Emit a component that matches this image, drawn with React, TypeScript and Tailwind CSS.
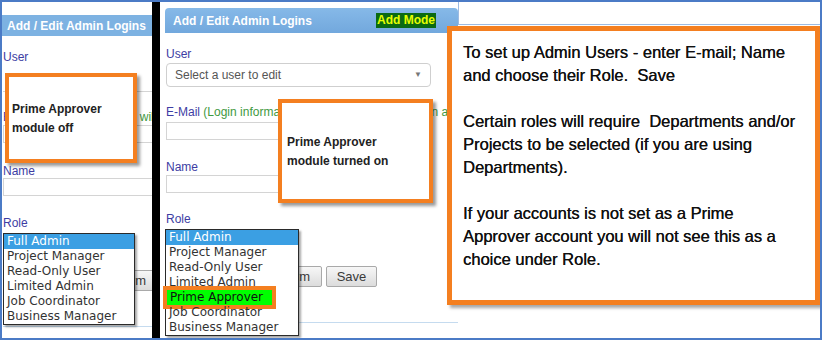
import React from "react";

const roleLeft = ["Full Admin", "Project Manager", "Read-Only User", "Limited Admin", "Job Coordinator", "Business Manager"];
const roleMid = ["Full Admin", "Project Manager", "Read-Only User", "Limited Admin", "Prime Approver", "Job Coordinator", "Business Manager"];

function Callout({ lines, className }: { lines: string[]; className: string }) {
  return (
    <div
      className={
        "absolute bg-white border-4 border-[#f47f20] shadow-[3px_3px_3px_rgba(0,0,0,0.4)] font-bold text-[12px] leading-[19px] text-[#222] whitespace-nowrap " +
        className
      }
    >
      {lines.map((l) => (
        <div key={l}>{l}</div>
      ))}
    </div>
  );
}

function ListBox({ items, className, highlight }: { items: string[]; className: string; highlight?: string }) {
  return (
    <div
      className={
        "absolute bg-white border-[1.5px] border-[#2a2a2a] shadow-[2px_2px_2px_rgba(0,0,0,0.35)] font-['DejaVu_Sans',Verdana,sans-serif] text-[12px] leading-[15px] text-[#333] " +
        className
      }
    >
      {items.map((it, i) =>
        i === 0 ? (
          <div key={it} className="bg-[#3b9fe3] text-white px-[3px] whitespace-nowrap">
            {it}
          </div>
        ) : it === highlight ? (
          <div key={it} className="h-[15px] whitespace-nowrap">
            <span className="inline-block ml-[1px] w-[105px] pl-[3px] bg-[#00ff00] text-[#111] ring-4 ring-[#f47f20]">{it}</span>
          </div>
        ) : (
          <div key={it} className="px-[3px] whitespace-nowrap">
            {it}
          </div>
        )
      )}
    </div>
  );
}

function Btn({ label, className }: { label: string; className: string }) {
  return (
    <div
      className={
        "h-[21px] flex items-center border border-[#a9a9a9] rounded-[2px] bg-gradient-to-b from-[#f7f7f7] to-[#dcdcdc] text-[13px] text-[#3a3a3a] whitespace-nowrap shrink-0 " +
        className
      }
    >
      {label}
    </div>
  );
}

export default function App() {
  const label = "h-[14px] leading-[14px] text-[12px] text-[#3d3da3] whitespace-nowrap";
  return (
    <div className="relative w-[822px] h-[340px] overflow-hidden bg-white border-2 border-[#4b7bc6] flex font-['Liberation_Sans',Arial,sans-serif]">
      {/* Left screenshot */}
      <div className="relative w-[150px] h-full overflow-hidden flex flex-col shrink-0">
        <div className="mt-[13px] h-[21px] bg-[#7db2e2] flex items-center pl-[5px] text-white font-bold text-[12px] whitespace-nowrap">
          Add / Edit Admin Logins
        </div>
        <div className="pl-[1px] flex flex-col">
          <div className={label + " mt-[14px]"}>User</div>
          <div className="mt-[2px] h-[26px] w-[200px] border-b border-[#d4d4d4]" />
          <div className={label + " mt-[18px]"}>
            E-Mail <span className="text-[#3f9a3f]">(Login information will be used to log in)</span>
          </div>
          <div className="mt-[1px] h-[18px] w-[200px] border border-[#d4d4d4]" />
          <div className={label + " mt-[21px]"}>Name</div>
          <div className="mt-[0px] h-[18px] w-[200px] border border-[#d4d4d4]" />
          <div className={label + " mt-[20px]"}>Role</div>
          <Btn label="Clear Form" className="mt-[40px] ml-[75px] w-[80px] justify-end pr-[11px]" />
          <div className="mt-[35px] h-[1px] bg-[#c5dbef] w-[200px]" />
        </div>
        <ListBox items={roleLeft} className="left-[1px] top-[231px] w-[132px]" />
      </div>

      {/* Black divider */}
      <div className="w-[8px] h-full bg-black shrink-0" />

      {/* Middle screenshot */}
      <div className="relative flex-1 h-full flex flex-col">
        <div className="flex items-start">
          <div className="ml-[5px] mt-[6px] w-[293px] h-[25px] rounded-t-[4px] bg-gradient-to-b from-[#86b9e8] to-[#72a8dd] flex items-center pl-[8px] pr-[22px] justify-between text-white font-bold text-[12px] whitespace-nowrap shrink-0">
            <span>Add / Edit Admin Logins</span>
            <span className="bg-[#0b6a12] text-[#e6ff00] px-[1px] leading-[15px]">Add Mode</span>
          </div>
          <div className="flex-1 h-[23px] border-l border-b border-[#9dbbe2]" />
        </div>
        <div className="pl-[6px] flex flex-col">
          <div className={label + " mt-[14px]"}>User</div>
          <div className="mt-[2px] h-[24px] w-[265px] border border-[#cfcfcf] rounded-[4px] flex items-center pl-[8px] pr-[8px] justify-between text-[12px] text-[#555]">
            <span>Select a user to edit</span>
            <span className="text-[8px] text-[#777]">▼</span>
          </div>
          <div className={label + " mt-[18px]"}>
            E-Mail <span className="text-[#3f9a3f]">(Login information will be used for your login a</span>
          </div>
          <div className="mt-[3px] h-[18px] w-[265px] border border-[#d4d4d4]" />
          <div className={label + " mt-[20px]"}>Name</div>
          <div className="mt-[1px] h-[18px] w-[265px] border border-[#d4d4d4]" />
          <div className={label + " mt-[19px]"}>Role</div>
          <div className="mt-[40px] flex gap-[4px] ml-[76px]">
            <Btn label="Clear Form" className="w-[80px] justify-end pr-[11px]" />
            <Btn label="Save" className="w-[51px] justify-center" />
          </div>
          <div className="mt-[35px] h-[1px] bg-[#c5dbef] w-[292px]" />
        </div>
        <ListBox items={roleMid} highlight="Prime Approver" className="left-[5px] top-[227px] w-[134px]" />
      </div>

      {/* Callouts */}
      <Callout lines={["Prime Approver", "module off"]} className="left-[3px] top-[71px] w-[132px] h-[90px] pl-[3px] pt-[23px]" />
      <Callout lines={["Prime Approver", "module turned on"]} className="left-[276px] top-[97px] w-[155px] h-[104px] pl-[5px] pt-[30px]" />
      <div className="absolute left-[445px] top-[24px] w-[373px] h-[279px] bg-white border-[5px] border-[#f47f20] shadow-[3px_3px_3px_rgba(0,0,0,0.35)] pl-[11px] pt-[10px] text-[16.5px] leading-[23px] text-[#111] [text-shadow:0.25px_0_0_#111]">
        <div>To set up Admin Users - enter E-mail; Name</div>
        <div>and choose their Role.&nbsp; Save</div>
        <div className="h-[23px]" />
        <div>Certain roles will require&nbsp; Departments and/or</div>
        <div>Projects to be selected (if you are using</div>
        <div>Departments).</div>
        <div className="h-[23px]" />
        <div>If your accounts is not set as a Prime</div>
        <div>Approver account you will not see this as a</div>
        <div>choice under Role.</div>
      </div>
    </div>
  );
}
